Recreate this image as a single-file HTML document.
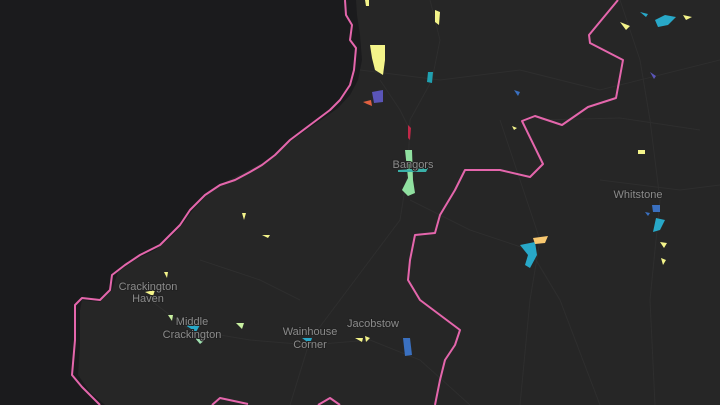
<!DOCTYPE html>
<html><head><style>
html,body{margin:0;padding:0;background:#1b1b1d;overflow:hidden}
svg{display:block}
text{font-family:"Liberation Sans",sans-serif;font-size:11px;fill:#8a8a8a;text-anchor:middle;stroke:#222;stroke-width:2px;paint-order:stroke}
</style></head><body>
<svg width="720" height="405" viewBox="0 0 720 405" xmlns="http://www.w3.org/2000/svg">
<rect width="720" height="405" fill="#1b1b1d"/>
<path d="M356,0 L357,15 L360,35 L362,60 L358,80 L350,95 L338,108 L318,122 L295,138 L278,152 L262,163 L245,172 L225,182 L208,194 L193,210 L182,225 L170,238 L155,250 L135,260 L118,272 L112,290 L100,302 L82,300 L80,310 L80,345 L78,375 L90,392 L105,405 L720,405 L720,0 Z" fill="#262626"/>
<g stroke="#2e2e2e" stroke-width="1" fill="none">
<path d="M430,0 L440,40 L432,80 L410,120 L408,170 L400,220 L370,260 L340,300 L310,340 L290,405"/>
<path d="M380,80 L400,110 L410,130"/>
<path d="M360,70 L400,75 L440,80 L520,70 L600,90 L720,60"/>
<path d="M620,0 L640,60 L650,120 L660,200 L650,300 L655,405"/>
<path d="M410,200 L470,230 L530,250 L560,300 L600,405"/>
<path d="M150,300 L190,330 L250,340 L310,345 L370,340 L420,360 L470,405"/>
<path d="M500,120 L520,180 L540,240 L530,300 L520,405"/>
<path d="M540,120 L620,118 L700,130"/>
<path d="M600,180 L680,190 L720,185"/>
<path d="M200,260 L260,280 L300,300"/>
</g>
<g fill="none" stroke="#e466ac" stroke-width="2" stroke-linejoin="round">
<path d="M345,0 L346,15 L352,25 L350,40 L356,48 L354,70 L350,85 L340,100 L330,110 L310,125 L290,140 L275,155 L262,165 L250,172 L235,180 L220,185 L205,195 L190,210 L180,225 L170,235 L160,245 L140,255 L125,265 L112,275 L110,290 L100,300 L82,298 L75,305 L75,340 L72,375 L82,387 L100,405"/>
<path d="M618,0 L589,35 L590,43 L623,60 L616,98 L588,107 L562,125 L535,116 L522,121 L543,164 L530,177 L500,170 L465,170 L455,190 L440,215 L435,233 L415,235 L410,260 L408,280 L420,300 L440,315 L460,330 L455,345 L445,360 L440,380 L435,405"/>
<path d="M212,405 L220,398 L248,404"/>
<path d="M318,405 L330,398 L340,405"/>
</g>
<g>
<path d="M370,45 L385,45 L385,60 L383,75 L375,70 L372,58 Z" fill="#f4f48a"/>
<path d="M435,10 L440,12 L439,25 L435,22 Z" fill="#f4f48a"/>
<path d="M428,72 L433,72 L432,83 L427,82 Z" fill="#20a0b0"/>
<path d="M372,92 L383,90 L383,102 L374,103 Z" fill="#5a55b8"/>
<path d="M363,102 L371,100 L372,106 L367,104 Z" fill="#e06040"/>
<path d="M408,125 L411,128 L410,140 L408,138 Z" fill="#c02848"/>
<path d="M405,150 L412,150 L413,180 L415,193 L408,196 L402,190 L408,178 Z" fill="#90e0a0"/>
<path d="M398,170 L428,168 L426,172 L398,172 Z" fill="#3ab0a8"/>
<path d="M365,0 L369,0 L369,6 L366,6 Z" fill="#f4f48a"/>
<path d="M640,12 L648,14 L646,17 Z M655,20 L665,15 L676,17 L668,25 L658,27 Z" fill="#28a8c8"/>
<path d="M620,22 L630,26 L626,30 Z M683,15 L692,17 L686,20 Z" fill="#f4f48a"/>
<path d="M650,72 L656,76 L654,79 Z" fill="#5a55b8"/>
<path d="M638,150 L645,150 L645,154 L638,154 Z" fill="#f4f48a"/>
<path d="M652,205 L660,205 L660,212 L653,212 Z M645,212 L650,213 L648,216 Z" fill="#3a70c0"/>
<path d="M656,218 L665,220 L660,230 L653,232 Z" fill="#28a8c8"/>
<path d="M660,242 L667,243 L664,248 Z M661,258 L666,260 L663,265 Z" fill="#f4f48a"/>
<path d="M520,245 L535,242 L537,255 L530,268 L525,265 L528,255 Z" fill="#28a8c8"/>
<path d="M533,238 L548,236 L545,243 L535,244 Z" fill="#f8c870"/>
<path d="M514,90 L520,92 L518,96 Z" fill="#3a70c0"/>
<path d="M512,126 L517,128 L514,130 Z" fill="#f4f48a"/>
<path d="M242,213 L246,213 L244,220 Z M262,235 L270,235 L268,238 Z" fill="#f4f48a"/>
<path d="M164,272 L168,272 L167,278 Z M145,292 L155,290 L153,296 Z" fill="#f4f48a"/>
<path d="M185,325 L200,325 L196,332 Z" fill="#28a8c8"/>
<path d="M236,323 L244,323 L242,329 Z M168,315 L173,315 L172,321 Z" fill="#c8f0a0"/>
<path d="M195,338 L205,340 L200,344 Z" fill="#a0e0b0"/>
<path d="M302,338 L312,338 L310,344 Z" fill="#28a8c8"/>
<path d="M355,338 L363,338 L362,342 Z M365,336 L370,338 L366,342 Z" fill="#f4f48a"/>
<path d="M403,338 L410,338 L412,355 L405,356 Z" fill="#3a70c0"/>
</g>
<text x="413" y="168">Bangors</text>
<text x="638" y="198">Whitstone</text>
<text x="148" y="290">Crackington</text>
<text x="148" y="302">Haven</text>
<text x="192" y="325">Middle</text>
<text x="192" y="338">Crackington</text>
<text x="310" y="335">Wainhouse</text>
<text x="310" y="348">Corner</text>
<text x="373" y="327">Jacobstow</text>
</svg>
</body></html>
